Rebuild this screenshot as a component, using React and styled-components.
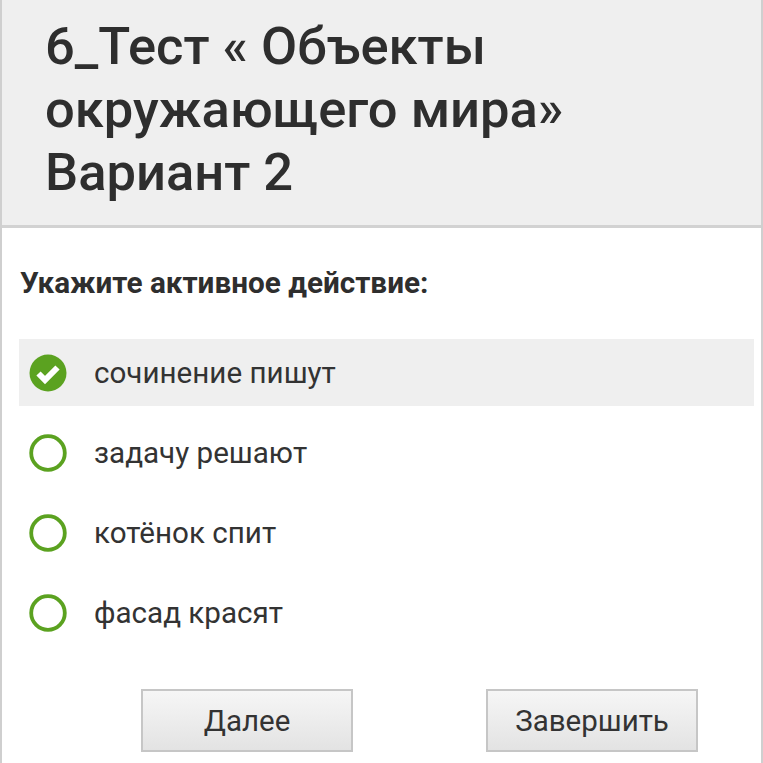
import React from "react";
import styled, { createGlobalStyle } from "styled-components";

const GlobalStyle = createGlobalStyle`
  html, body { margin: 0; padding: 0; background: #ffffff; }
  body { font-family: Roboto, "Noto Sans", "Liberation Sans", sans-serif; color: #333333; }
  * { box-sizing: border-box; }
`;

const Page = styled.div`
  min-height: 763px;
  border-left: 2px solid #cfcfcf;
  border-right: 2px solid #cfcfcf;
  display: flex;
  flex-direction: column;
`;

const Header = styled.header`
  background: #efefef;
  border-bottom: 3px solid #d2d2d2;
  padding: 15px 20px 21px 43px;
`;

const Title = styled.h1`
  margin: 0;
  font-size: 52.5px;
  line-height: 63px;
  font-weight: 500;
  color: #2e2e2e;
`;

const Content = styled.main`
  padding: 37px 7px 0 17px;
  display: flex;
  flex-direction: column;
`;

const Question = styled.h2`
  margin: 0 0 38px 1px;
  font-size: 29.7px;
  line-height: 36px;
  font-weight: 700;
  color: #2e2e2e;
`;

const Options = styled.ul`
  list-style: none;
  margin: 0;
  padding: 0;
  display: flex;
  flex-direction: column;
  gap: 13px;
`;

const Option = styled.li`
  height: 67px;
  display: flex;
  align-items: center;
  gap: 27px;
  padding-left: 10px;
  background: ${(p) => (p.$selected ? "#efefef" : "transparent")};
`;

const OptionText = styled.span`
  font-size: 29.6px;
  color: #333333;
`;

const Icon = styled.svg`
  width: 38px;
  height: 38px;
  flex: none;
`;

const Buttons = styled.div`
  display: flex;
  gap: 133px;
  padding-left: 122px;
  margin-top: 43px;
`;

const Button = styled.button`
  width: 212px;
  height: 63px;
  border: 2px solid #c6c6c6;
  border-radius: 0;
  background: linear-gradient(#f6f6f6, #e3e3e3);
  font-family: Roboto, "Noto Sans", "Liberation Sans", sans-serif;
  font-size: 29.5px;
  color: #333333;
  padding: 0;
`;

const GREEN = "#5ba220";

function CheckIcon() {
  return (
    <Icon viewBox="0 0 38 38">
      <circle cx="19" cy="19" r="18.5" fill={GREEN} />
      <path d="M9.5 19.5 L16 26 L28.5 13.5" fill="none" stroke="#ffffff" strokeWidth="6" strokeLinejoin="miter" />
    </Icon>
  );
}

function EmptyIcon() {
  return (
    <Icon viewBox="0 0 38 38">
      <circle cx="19" cy="19" r="16.8" fill="none" stroke={GREEN} strokeWidth="3.8" />
    </Icon>
  );
}

const options = [
  { text: "сочинение пишут", selected: true },
  { text: "задачу решают" },
  { text: "котёнок спит" },
  { text: "фасад красят" },
];

export default function App() {
  return (
    <>
      <GlobalStyle />
      <Page>
        <Header>
          <Title>
            6_Тест « Объекты
            <br />
            окружающего мира»
            <br />
            Вариант 2
          </Title>
        </Header>
        <Content>
          <Question>Укажите активное действие:</Question>
          <Options>
            {options.map((o) => (
              <Option key={o.text} $selected={o.selected}>
                {o.selected ? <CheckIcon /> : <EmptyIcon />}
                <OptionText>{o.text}</OptionText>
              </Option>
            ))}
          </Options>
          <Buttons>
            <Button>Далее</Button>
            <Button>Завершить</Button>
          </Buttons>
        </Content>
      </Page>
    </>
  );
}
